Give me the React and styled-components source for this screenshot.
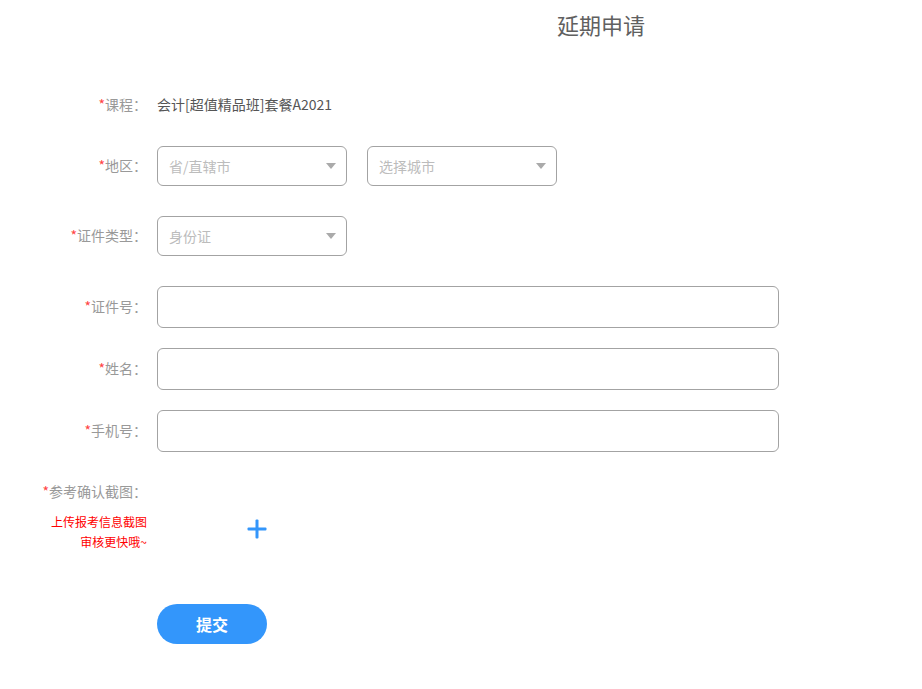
import React from 'react';
import styled, { createGlobalStyle } from 'styled-components';

const GlobalStyle = createGlobalStyle`
  html, body {
    margin: 0;
    padding: 0;
    background: #fff;
  }
  body {
    font-family: "Noto Sans CJK SC", "Noto Sans", sans-serif;
    color: #555;
  }
  * {
    box-sizing: border-box;
  }
`;

const Page = styled.div`
  width: 922px;
  min-height: 689px;
  background: #fff;
`;

const Title = styled.h2`
  margin: 0;
  padding: 9px 0 0 280px;
  font-size: 22px;
  line-height: 30px;
  font-weight: 400;
  color: #606060;
  text-align: center;
`;

const Form = styled.form`
  padding-top: 46px;
`;

const Row = styled.div`
  display: flex;
  align-items: center;
  height: ${({ h }) => h || 40}px;
  margin-bottom: ${({ mb }) => mb || 0}px;
`;

const Label = styled.label`
  flex-shrink: 0;
  width: 147px;
  margin-right: 10px;
  margin-top: -2px;
  text-align: right;
  font-size: 14px;
  color: #999;
  white-space: nowrap;
`;

const Star = styled.span`
  color: #f44;
`;

const Value = styled.span`
  margin-top: -2px;
  font-size: 14px;
  color: #555;
`;

const Selects = styled.div`
  display: flex;
  gap: 20px;
`;

const Select = styled.div`
  display: flex;
  align-items: center;
  justify-content: space-between;
  width: 190px;
  height: 40px;
  padding: 0 10px 0 11px;
  border: 1px solid #a3a3a3;
  border-radius: 6px;
  font-size: 14px;
  color: #bcbcbc;
  cursor: pointer;
`;

const Caret = styled.i`
  width: 0;
  height: 0;
  border-left: 5px solid transparent;
  border-right: 5px solid transparent;
  border-top: 6px solid #aaa;
`;

const Input = styled.input`
  width: 622px;
  height: 42px;
  padding: 0 12px;
  border: 1px solid #a3a3a3;
  border-radius: 6px;
  font-size: 14px;
  font-family: inherit;
  outline: none;
`;

const UploadRow = styled.div`
  display: flex;
  align-items: flex-start;
`;

const UploadSide = styled.div`
  flex-shrink: 0;
  width: 147px;
  margin-right: 10px;
  text-align: right;
`;

const UploadLabel = styled.div`
  font-size: 14px;
  line-height: 38px;
  color: #999;
  white-space: nowrap;
`;

const Hint = styled.p`
  margin: 2px 0 0;
  font-size: 12px;
  line-height: 20px;
  color: #f00;
`;

const UploadTrigger = styled.div`
  display: flex;
  align-items: center;
  justify-content: center;
  width: 40px;
  height: 40px;
  margin: 37px 0 0 80px;
  cursor: pointer;
`;

const Actions = styled.div`
  padding: 52px 0 0 157px;
`;

const Submit = styled.button`
  width: 110px;
  height: 40px;
  border: none;
  border-radius: 20px;
  background: #3396fb;
  color: #fff;
  font-family: inherit;
  font-size: 16px;
  font-weight: 700;
  cursor: pointer;
`;

const PlusIcon = () => (
  <svg width="20" height="20" viewBox="0 0 20 20">
    <rect x="0.5" y="8.5" width="19" height="3" rx="1" fill="#3396fb" />
    <rect x="8.5" y="0.5" width="3" height="19" rx="1" fill="#3396fb" />
  </svg>
);

const Field = ({ label, children, ...rest }) => (
  <Row {...rest}>
    <Label>
      <Star>*</Star>
      {label}：
    </Label>
    {children}
  </Row>
);

export default function App() {
  return (
    <Page>
      <GlobalStyle />
      <Title>延期申请</Title>
      <Form onSubmit={(e) => e.preventDefault()}>
        <Field label="课程" mb={21}>
          <Value>会计[超值精品班]套餐A2021</Value>
        </Field>
        <Field label="地区" mb={30}>
          <Selects>
            <Select>
              省/直辖市
              <Caret />
            </Select>
            <Select>
              选择城市
              <Caret />
            </Select>
          </Selects>
        </Field>
        <Field label="证件类型" mb={30}>
          <Select>
            身份证
            <Caret />
          </Select>
        </Field>
        <Field label="证件号" h={42} mb={20}>
          <Input type="text" />
        </Field>
        <Field label="姓名" h={42} mb={20}>
          <Input type="text" />
        </Field>
        <Field label="手机号" h={42} mb={20}>
          <Input type="text" />
        </Field>
        <UploadRow>
          <UploadSide>
            <UploadLabel>
              <Star>*</Star>参考确认截图：
            </UploadLabel>
            <Hint>
              上传报考信息截图
              <br />
              审核更快哦~
            </Hint>
          </UploadSide>
          <UploadTrigger>
            <PlusIcon />
          </UploadTrigger>
        </UploadRow>
        <Actions>
          <Submit type="submit">提交</Submit>
        </Actions>
      </Form>
    </Page>
  );
}
